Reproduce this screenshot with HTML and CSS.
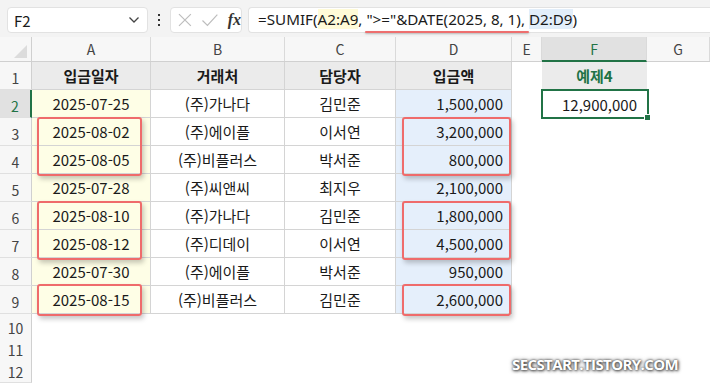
FILE: index.html
```html
<!DOCTYPE html>
<html lang="ko">
<head>
  <meta charset="UTF-8">
  <meta name="viewport" content="width=device-width, initial-scale=1.0">
  <title>SUMIF 예제4</title>
  <link rel="stylesheet" href="styles.css">
</head>
<body>
  <!-- Formula bar -->
  <div class="toolbar">
    <div class="namebox">
      <span>F2</span>
      <svg width="12" height="8" viewBox="0 0 12 8"><path d="M1.5 1.5 L6 6 L10.5 1.5" fill="none" stroke="#444" stroke-width="1.3"/></svg>
    </div>
    <div class="dots"><i></i><i></i><i></i></div>
    <div class="fxbox">
      <svg width="16" height="16" viewBox="0 0 16 16"><path d="M2 2 L14 14 M14 2 L2 14" stroke="#bdbdbd" stroke-width="1.2"/></svg>
      <svg width="18" height="16" viewBox="0 0 18 16"><path d="M1.5 8.5 L6.5 13.5 L16.5 2.5" fill="none" stroke="#bdbdbd" stroke-width="1.2"/></svg>
      <span class="fx">fx</span>
    </div>
    <div class="formula">
      =SUMIF(<span class="ref-a">A2:A9</span>, <span class="crit">"&gt;="&amp;DATE(2025, 8, 1)</span>, <span class="ref-d">D2:D9</span>)
    </div>
  </div>

  <!-- Sheet -->
  <div class="sheet">
    <div class="row head">
      <div class="corner"><span></span></div>
      <div class="ch">A</div><div class="ch">B</div><div class="ch">C</div><div class="ch">D</div>
      <div class="ch">E</div><div class="ch sel">F</div><div class="ch">G</div>
    </div>

    <div class="row">
      <div class="rh">1</div>
      <div class="td th">입금일자</div><div class="td th">거래처</div><div class="td th">담당자</div><div class="td th">입금액</div>
      <div></div><div class="title">예제4</div><div></div>
    </div>
    <div class="row">
      <div class="rh sel">2</div>
      <div class="td date">2025-07-25</div><div class="td">(주)가나다</div><div class="td">김민준</div><div class="td amt">1,500,000</div>
      <div></div><div class="result">12,900,000</div><div></div>
    </div>
    <div class="row">
      <div class="rh">3</div>
      <div class="td date">2025-08-02</div><div class="td">(주)에이플</div><div class="td">이서연</div><div class="td amt">3,200,000</div>
      <div></div><div></div><div></div>
    </div>
    <div class="row">
      <div class="rh">4</div>
      <div class="td date">2025-08-05</div><div class="td">(주)비플러스</div><div class="td">박서준</div><div class="td amt">800,000</div>
      <div></div><div></div><div></div>
    </div>
    <div class="row">
      <div class="rh">5</div>
      <div class="td date">2025-07-28</div><div class="td">(주)씨앤씨</div><div class="td">최지우</div><div class="td amt">2,100,000</div>
      <div></div><div></div><div></div>
    </div>
    <div class="row">
      <div class="rh">6</div>
      <div class="td date">2025-08-10</div><div class="td">(주)가나다</div><div class="td">김민준</div><div class="td amt">1,800,000</div>
      <div></div><div></div><div></div>
    </div>
    <div class="row">
      <div class="rh">7</div>
      <div class="td date">2025-08-12</div><div class="td">(주)디데이</div><div class="td">이서연</div><div class="td amt">4,500,000</div>
      <div></div><div></div><div></div>
    </div>
    <div class="row">
      <div class="rh">8</div>
      <div class="td date">2025-07-30</div><div class="td">(주)에이플</div><div class="td">박서준</div><div class="td amt">950,000</div>
      <div></div><div></div><div></div>
    </div>
    <div class="row">
      <div class="rh">9</div>
      <div class="td date">2025-08-15</div><div class="td">(주)비플러스</div><div class="td">김민준</div><div class="td amt">2,600,000</div>
      <div></div><div></div><div></div>
    </div>
    <div class="row short"><div class="rh">10</div></div>
    <div class="row short"><div class="rh">11</div></div>
    <div class="row short"><div class="rh">12</div></div>

    <!-- Highlight boxes -->
    <div class="mark mark-a r34"></div>
    <div class="mark mark-a r67"></div>
    <div class="mark mark-a r9"></div>
    <div class="mark mark-d r34"></div>
    <div class="mark mark-d r67"></div>
    <div class="mark mark-d r9"></div>

    <!-- Active cell F2 -->
    <div class="cursor"><span></span></div>
  </div>

  <div class="watermark">SECSTART.TISTORY.COM</div>
</body>
</html>
```

FILE: styles.css
```css
/* Base */
body {
  margin: 0;
  width: 710px;
  height: 385px;
  overflow: hidden;
  background: #fff;
  font-family: "Noto Sans CJK KR", "Noto Sans", sans-serif;
  color: #1a1a1a;
  position: relative;
}

/* Formula Bar */
.toolbar {
  height: 37px;
  background: #f3f3f3;
  display: flex;
  align-items: center;
  padding-left: 7px;
  box-sizing: border-box;
}

.namebox {
  width: 141px;
  height: 26px;
  box-sizing: border-box;
  background: #fff;
  border: 1px solid #e2e2e2;
  border-radius: 4px;
  display: flex;
  align-items: center;
  justify-content: space-between;
  padding: 0 7px 0 6px;
  font-size: 15px;
  margin-top: 3px;
}

.dots {
  width: 22px;
  display: flex;
  flex-direction: column;
  align-items: center;
  gap: 3px;
  margin-top: 3px;
}

.dots i {
  width: 2px;
  height: 2px;
  background: #333;
}

.fxbox {
  width: 72px;
  height: 26px;
  box-sizing: border-box;
  background: #fff;
  border: 1px solid #e2e2e2;
  border-radius: 4px;
  display: flex;
  align-items: center;
  gap: 8px;
  padding-left: 6px;
  margin-top: 3px;
}

.fx {
  font-family: "Liberation Serif", serif;
  font-style: italic;
  font-weight: bold;
  font-size: 16px;
  color: #333;
  margin-left: 1px;
}

.formula {
  flex: 1;
  height: 26px;
  margin-left: 6px;
  margin-top: 3px;
  box-sizing: border-box;
  background: #fff;
  border: 1px solid #e2e2e2;
  border-right: none;
  border-radius: 4px 0 0 4px;
  padding-left: 9px;
  font-family: "Noto Sans", sans-serif;
  font-size: 15.2px;
  line-height: 23px;
  white-space: nowrap;
  color: #1a1a1a;
}

.ref-a {
  background: #fffbd8;
}

.ref-d {
  background: #e2eefa;
}

.crit {
  position: relative;
}

.crit::after {
  content: "";
  position: absolute;
  left: -1px;
  right: -8px;
  bottom: -4px;
  height: 2px;
  border-radius: 2px;
  background: #ee6f6f;
  box-shadow: 0 1px 2px rgba(0, 0, 0, 0.25);
}

/* Sheet Grid */
.sheet {
  position: relative;
}

.row {
  display: grid;
  grid-template-columns: 32px 119px 134px 111px 116px 30px 105px 1fr;
  height: 28px;
  font-size: 15px;
}

.row.head {
  height: 25px;
  background: #f7f7f7;
  border-bottom: 1px solid #d0d0d0;
  box-sizing: border-box;
}

.row.short {
  height: 22px;
}

.corner {
  border-right: 1px solid #d0d0d0;
  position: relative;
}

.corner span {
  position: absolute;
  right: 4px;
  bottom: 3px;
  width: 0;
  height: 0;
  border-left: 13px solid transparent;
  border-bottom: 13px solid #dcdcdc;
}

.ch {
  border-right: 1px solid #dadada;
  display: flex;
  align-items: center;
  justify-content: center;
  font-size: 14px;
  color: #444;
}

.ch.sel {
  background: #e1e1e1;
  color: #217346;
  border-bottom: 2px solid #217346;
  margin-bottom: -1px;
}

.rh {
  background: #f7f7f7;
  border-right: 1px solid #d0d0d0;
  border-bottom: 1px solid #e0e0e0;
  display: flex;
  align-items: center;
  justify-content: center;
  padding-top: 4px;
  box-sizing: border-box;
  font-size: 14px;
  color: #444;
}

.rh.sel {
  background: #e1e1e1;
  color: #217346;
  border-right: 2px solid #217346;
}

/* Table cells */
.td {
  border-right: 1px solid #d4d4d4;
  border-bottom: 1px solid #d4d4d4;
  display: flex;
  align-items: center;
  justify-content: center;
  white-space: nowrap;
}

.th {
  background: #ebebeb;
  font-weight: bold;
}

.date {
  background: #fefee6;
}

.amt {
  background: #e5effb;
  justify-content: flex-end;
  padding-right: 8px;
}

.title {
  background: #ebebeb;
  color: #217346;
  font-weight: bold;
  display: flex;
  align-items: center;
  justify-content: center;
  border-bottom: 1px solid #d4d4d4;
}

.result {
  display: flex;
  align-items: center;
  justify-content: flex-end;
  padding-right: 10px;
}

/* Red highlight boxes */
.mark {
  position: absolute;
  border: 2px solid #ef6b6b;
  border-radius: 3px;
  box-sizing: border-box;
  box-shadow: 2px 3px 5px rgba(0, 0, 0, 0.22);
}

.mark-a {
  left: 37px;
  width: 105px;
}

.mark-d {
  left: 402px;
  width: 109px;
}

.r34 {
  top: 80px;
  height: 59px;
}

.r67 {
  top: 164px;
  height: 59px;
}

.r9 {
  top: 247px;
  height: 32px;
}

/* Active cell */
.cursor {
  position: absolute;
  left: 541px;
  top: 52px;
  width: 108px;
  height: 30px;
  box-sizing: border-box;
  border: 2px solid #217346;
}

.cursor span {
  position: absolute;
  right: -4px;
  bottom: -4px;
  width: 5px;
  height: 5px;
  background: #217346;
  border: 1px solid #fff;
}

/* Watermark */
.watermark {
  position: absolute;
  left: 512px;
  top: 354px;
  font-family: "Open Sans", sans-serif;
  font-weight: bold;
  font-size: 15px;
  letter-spacing: -0.6px;
  color: #fff;
  text-shadow: 0 0 2px #444, 1px 1px 3px #555, 0 0 4px #777;
}
```
